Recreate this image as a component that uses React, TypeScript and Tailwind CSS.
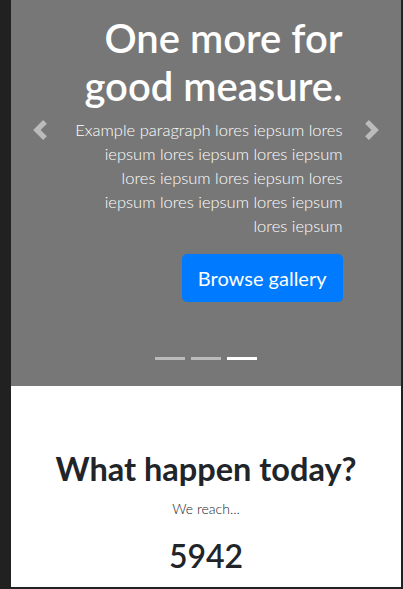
function PrevIcon() {
  return (
    <svg width="20" height="20" viewBox="0 0 8 8" fill="#fff" className="opacity-50">
      <path d="M5.25 0l-4 4 4 4 1.5-1.5L4.25 4l2.5-2.5L5.25 0z" />
    </svg>
  );
}

function NextIcon() {
  return (
    <svg width="20" height="20" viewBox="0 0 8 8" fill="#fff" className="opacity-50">
      <path d="M2.75 0l-1.5 1.5L3.75 4l-2.5 2.5L2.75 8l4-4-4-4z" />
    </svg>
  );
}

export default function App() {
  const slides = [0, 1, 2];
  const active = 2;

  return (
    <div
      className="h-[589px] w-[403px] flex bg-[#212121] pl-[11px] pr-[2px] pb-[2px] overflow-hidden"
      style={{ fontFamily: 'Lato, "Noto Sans", sans-serif' }}
    >
      <div className="flex-1 flex flex-col bg-white overflow-hidden">
        <section className="relative h-[386px] shrink-0 bg-[#777777] flex flex-col">
          <div className="px-[58.5px] pt-[14px] text-right text-white">
            <h1 className="text-[40px] leading-[48px] font-semibold mb-2">One more for good measure.</h1>
            <p className="text-[16.5px] leading-6 font-light mb-4">
              Example paragraph lores iepsum lores iepsum lores iepsum lores iepsum lores iepsum lores iepsum lores
              iepsum lores iepsum lores iepsum lores iepsum
            </p>
            <button className="h-12 px-4 rounded-[5px] bg-[#007bff] text-white text-[20px] leading-[30px]">
              Browse gallery
            </button>
          </div>

          <div className="mt-auto mb-4 flex justify-center">
            {slides.map((i) => (
              <span
                key={i}
                className={
                  'mx-[3px] w-[30px] h-[3px] my-[10px] bg-white ' + (i === active ? 'opacity-100' : 'opacity-50')
                }
              />
            ))}
          </div>

          <div className="absolute left-[19px] top-[120px]">
            <PrevIcon />
          </div>
          <div className="absolute right-[19px] top-[120px]">
            <NextIcon />
          </div>
        </section>

        <section className="flex-1 flex flex-col items-center text-[#212529] pt-[64px]">
          <h2 className="text-[32.5px] leading-[38px] font-bold">What happen today?</h2>
          <p className="mt-[10px] text-[14px] leading-[21px] font-light">We reach...</p>
          <p className="mt-[18px] text-[32px] leading-[38px] font-semibold">5942</p>
        </section>
      </div>
    </div>
  );
}
